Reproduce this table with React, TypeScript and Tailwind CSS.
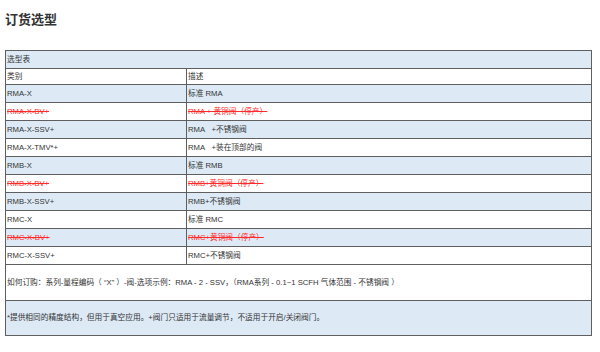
const rows: { type: string; desc: string; off?: boolean }[] = [
  { type: 'RMA-X', desc: '标准 RMA' },
  { type: 'RMA-X-BV+', desc: 'RMA  + 黄铜阀（停产）', off: true },
  { type: 'RMA-X-SSV+', desc: 'RMA\u00a0\u00a0\u00a0+不锈钢阀' },
  { type: 'RMA-X-TMV*+', desc: 'RMA\u00a0\u00a0\u00a0+装在顶部的阀' },
  { type: 'RMB-X', desc: '标准 RMB' },
  { type: 'RMB-X-BV+', desc: 'RMB+黄铜阀（停产）', off: true },
  { type: 'RMB-X-SSV+', desc: 'RMB+不锈钢阀' },
  { type: 'RMC-X', desc: '标准 RMC' },
  { type: 'RMC-X-BV+', desc: 'RMC+黄铜阀（停产）', off: true },
  { type: 'RMC-X-SSV+', desc: 'RMC+不锈钢阀' },
]

const font = { fontFamily: '"Liberation Sans", "Noto Sans CJK SC", sans-serif' }

export default function App() {
  return (
    <div className="w-[600px] h-[352px] bg-white px-[5px] pt-[11px] text-[#333]" style={font}>
      <h1 className="text-[13px] font-bold leading-[18px] text-[#333]">订货选型</h1>

      <table className="mt-[21px] w-[587px] border-collapse border border-[#5f5f5f] text-[7.7px] leading-none">
        <tbody>
          <tr className="h-[18px] bg-[#ddeaf6]">
            <td colSpan={2} className="border border-[#5f5f5f] px-px pt-px">选型表</td>
          </tr>
          <tr className="h-[16px] bg-white">
            <td className="w-[181px] border border-[#5f5f5f] px-px">类别</td>
            <td className="border border-[#5f5f5f] px-px">描述</td>
          </tr>
          {rows.map((r, i) => (
            <tr key={r.type} className={`h-[18px] ${i % 2 === 0 ? 'bg-[#ddeaf6]' : 'bg-white'}`}>
              <td className={`border border-[#5f5f5f] px-px ${r.off ? 'text-[#ff2a2a] line-through' : ''}`}>{r.type}</td>
              <td className={`border border-[#5f5f5f] px-px ${r.off ? 'text-[#ff2a2a] line-through' : ''}`}>{r.desc}</td>
            </tr>
          ))}
          <tr className="h-[36px] bg-white">
            <td colSpan={2} className="border border-[#5f5f5f] px-px">
              如何订购：系列-量程编码（ “X” ）-阀-选项示例：RMA - 2 - SSV，（RMA系列 - 0.1~1 SCFH 气体范围 - 不锈钢阀 ）
            </td>
          </tr>
          <tr className="h-[35px] bg-[#ddeaf6]">
            <td colSpan={2} className="border border-[#5f5f5f] px-px align-top pt-[13px]">
              *提供相同的精度结构，但用于真空应用。+阀门只适用于流量调节，不适用于开启/关闭阀门。
            </td>
          </tr>
        </tbody>
      </table>
    </div>
  )
}
